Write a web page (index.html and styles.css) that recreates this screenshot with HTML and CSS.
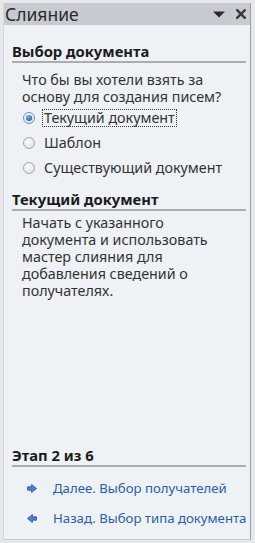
FILE: index.html
```html
<!DOCTYPE html>
<html lang="ru">
<head>
<meta charset="utf-8">
<link rel="stylesheet" href="styles.css">
</head>
<body>
<div class="frame">
  <div class="pane">
    <div class="titlebar">
      <span class="title">Слияние</span>
      <span class="tools">
        <svg class="tri" width="12" height="7" viewBox="0 0 12 7"><path d="M0 0.5H12L6 6.5Z" fill="#2b2b2b"/></svg>
        <svg class="close" width="10" height="10" viewBox="0 0 10 10"><path d="M1.2 1.2L8.8 8.8M8.8 1.2L1.2 8.8" stroke="#3a3a3a" stroke-width="2.4" stroke-linecap="square"/></svg>
      </span>
    </div>
    <div class="content">
      <h2 class="head">Выбор документа</h2>
      <p class="question">Что бы вы хотели взять за основу для создания писем?</p>
      <ul class="radios">
        <li class="radio checked"><span class="dot"></span><span class="label focus">Текущий документ</span></li>
        <li class="radio"><span class="dot"></span><span class="label">Шаблон</span></li>
        <li class="radio"><span class="dot"></span><span class="label">Существующий документ</span></li>
      </ul>
      <h2 class="head second">Текущий документ</h2>
      <p class="desc">Начать с указанного документа и использовать мастер слияния для добавления сведений о получателях.</p>
      <div class="spacer"></div>
      <h2 class="head step">Этап 2 из 6</h2>
      <ul class="links">
        <li class="link"><svg class="arrow" width="10" height="9" viewBox="0 0 10 9"><path d="M0.6 2.8H4.6V0.5L9.5 4.5L4.6 8.5V6.2H0.6Z" fill="#4a7fe0" stroke="#2a4f9e" stroke-width="0.8"/></svg><span>Далее. Выбор получателей</span></li>
        <li class="link"><svg class="arrow" width="10" height="9" viewBox="0 0 10 9"><path d="M9.4 2.8H5.4V0.5L0.5 4.5L5.4 8.5V6.2H9.4Z" fill="#4a7fe0" stroke="#2a4f9e" stroke-width="0.8"/></svg><span>Назад. Выбор типа документа</span></li>
      </ul>
    </div>
  </div>
</div>
</body>
</html>
```
FILE: styles.css
```css
html, body {
  margin: 0;
  padding: 0;
  width: 255px;
  height: 543px;
  overflow: hidden;
  background: #e4e6ea;
}
.frame {
  box-sizing: border-box;
  width: 255px;
  height: 543px;
  padding: 3px;
  background: #e7e8eb;
}
.pane {
  box-sizing: border-box;
  width: 248px;
  height: 537px;
  background: #eef1f5;
  border-right: 1px solid #9a9ea6;
  border-left: 1px solid #d6d9de;
  border-bottom: 1px solid #c6c9ce;
  display: flex;
  flex-direction: column;
  overflow: hidden;
  font-family: "Noto Sans", "Open Sans", sans-serif;
  color: #333333;
}
.titlebar {
  height: 22px;
  flex: none;
  background: #c7cbd1;
  display: flex;
  align-items: center;
  justify-content: space-between;
  padding: 0 4px 0 1px;
}
.title {
  font-size: 17.5px;
  line-height: 20px;
  color: #2a2a2a;
}
.tools {
  display: flex;
  align-items: center;
  gap: 11px;
}
.content {
  flex: 1;
  display: flex;
  flex-direction: column;
  padding: 0 4px 6px 8px;
  min-width: 0;
}
.head {
  margin: 0;
  font-size: 14.8px;
  font-weight: bold;
  color: #1c1c1c;
  border-bottom: 2px solid #a9acb1;
  line-height: 17px;
  padding-bottom: 1px;
}
.head:first-child {
  margin-top: 18px;
}
.question {
  margin: 8px 0 0 10px;
  font-size: 14.3px;
  line-height: 17px;
}
.radios {
  list-style: none;
  margin: 0 0 0 11px;
  padding: 0;
}
.radio {
  display: flex;
  align-items: center;
  height: 25px;
  font-size: 14.3px;
}
.dot {
  box-sizing: border-box;
  width: 12px;
  height: 12px;
  border-radius: 50%;
  border: 1px solid #a3a8af;
  background: radial-gradient(circle at 40% 35%, #ffffff, #d6d9de);
  margin-right: 7px;
  flex: none;
  position: relative;
}
.checked .dot {
  border-color: #7090b5;
}
.checked .dot::after {
  content: "";
  position: absolute;
  left: 2px;
  top: 2px;
  width: 6px;
  height: 6px;
  border-radius: 50%;
  background: radial-gradient(circle at 40% 35%, #7cbcf2, #1f5f9f 75%);
}
.label {
  padding: 0 1px;
  line-height: 16px;
  border: 1px dotted transparent;
}
.label.focus {
  border-color: #333;
}
.second {
  margin-top: 11px;
}
.desc {
  margin: 3px 0 0 10px;
  max-width: 212px;
  font-size: 14.3px;
  line-height: 17px;
}
.spacer {
  flex: 1;
}
.links {
  list-style: none;
  margin: 6px 0 0 0;
  padding: 0;
}
.link {
  display: flex;
  align-items: center;
  height: 30px;
  white-space: nowrap;
  font-size: 13.2px;
  color: #2a5ea8;
}
.arrow {
  margin: 0 16px 0 15px;
  flex: none;
}
```
